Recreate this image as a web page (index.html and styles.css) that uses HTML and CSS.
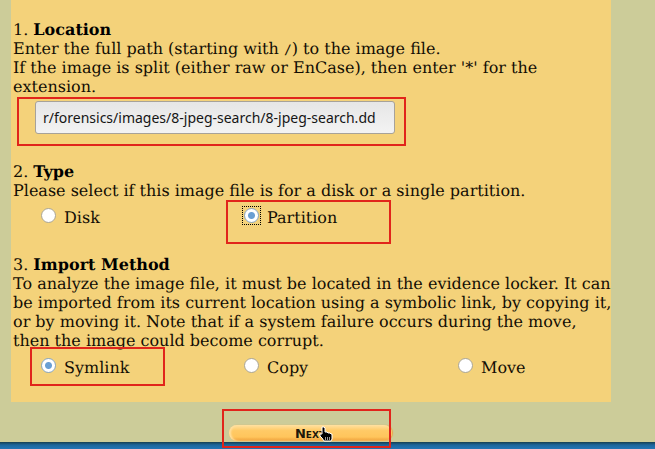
FILE: index.html
```
<!DOCTYPE html>
<html lang="en">
<head>
<meta charset="utf-8">
<title>Add Image</title>
<link rel="stylesheet" href="styles.css">
</head>
<body>
<form class="page">
  <div class="panel">
    <section class="step">
      <h2>1. <b>Location</b></h2>
      <p><label for="path">Enter the full path (starting with <code>/</code>) to the image file.<br>
      If the image is split (either raw or EnCase), then enter '*' for the<br>extension.</label></p>
      <div class="field">
        <input class="path" id="path" type="text" value="r/forensics/images/8-jpeg-search/8-jpeg-search.dd">
        <span class="mark mark-path"></span>
      </div>
    </section>
    <section class="step">
      <h2>2. <b>Type</b></h2>
      <p>Please select if this image file is for a disk or a single partition.</p>
      <div class="options">
        <label class="option"><input type="radio" name="type">Disk</label>
        <label class="option"><input type="radio" name="type" checked><span class="focus-ring"></span>Partition<span class="mark mark-partition"></span></label>
      </div>
    </section>
    <section class="step">
      <h2>3. <b>Import Method</b></h2>
      <p>To analyze the image file, it must be located in the evidence locker. It can<br>be imported from its current location using a symbolic link, by copying it,<br>or by moving it. Note that if a system failure occurs during the move,<br>then the image could become corrupt.</p>
      <div class="options">
        <label class="option"><input type="radio" name="method" checked>Symlink<span class="mark mark-symlink"></span></label>
        <label class="option"><input type="radio" name="method">Copy</label>
        <label class="option"><input type="radio" name="method">Move</label>
      </div>
    </section>
  </div>
  <div class="actions">
    <div class="next-wrap">
      <button class="next" type="button">Next</button>
      <svg class="pointer" width="14" height="16" viewBox="0 0 14 16" aria-hidden="true">
        <path d="M3 1h2l1 1v4h2l1 1h2l1 1h1v5l-1 2H5l-2-3-2-2V8h2z" fill="#000" stroke="#fff"/>
        <path d="M6.500 11v3M8.500 11v3M10.500 11v3" stroke="#999"/>
      </svg>
      <span class="mark mark-next"></span>
    </div>
  </div>
</form>
<footer class="desktop"></footer>
</body>
</html>
```
FILE: styles.css
```
* { box-sizing: border-box; }
body {
  margin: 0;
  min-height: 100vh;
  display: flex;
  flex-direction: column;
  background: #cccc99;
  color: #120d04;
  font: 16px/19px "DejaVu Serif", serif;
  text-rendering: geometricPrecision;
}
.page { flex: 1; }
.panel {
  margin: 0 44px 0 11px;
  padding: 20px 2px 0;
  background: #f4d27a;
}
.step { padding-bottom: 25px; }
.step:last-child { padding-bottom: 22px; }
h2, p { margin: 0; font-size: 16px; font-weight: 400; white-space: nowrap; }
h2 b { color: #000; }
code { font: 13px "DejaVu Sans Mono", monospace; line-height: 1; }
.field {
  position: relative;
  height: 41px;
  padding: 5px 0 0 22px;
}
.path {
  display: block;
  width: 360px;
  height: 33px;
  padding: 0 7px;
  border: 1px solid #a7a299;
  border-radius: 3px;
  background: linear-gradient(#e6e6e6, #f3f3f3);
  color: #151515;
  font: 14px "Noto Sans", sans-serif;
}
.options {
  display: grid;
  grid-template-columns: 203fr 214fr 151fr;
  padding: 8px 0 0 28px;
}
.option {
  position: relative;
  display: flex;
  align-items: flex-start;
  gap: 8px;
  height: 22px;
}
.option input {
  appearance: none;
  width: 15px;
  height: 15px;
  margin: 0;
  border: 1px solid #aaa594;
  border-radius: 50%;
  background: #fff;
}
.option input:checked {
  border-color: #86a6c4;
  background: radial-gradient(circle, #6a9fd3 0 3px, #fff 4px);
}
.focus-ring {
  position: absolute;
  top: -2px;
  left: -2px;
  width: 19px;
  height: 19px;
  border: 1px dotted #000;
}
.mark {
  position: absolute;
  border: 2px solid #e1251b;
  pointer-events: none;
}
.mark-path { left: 4px; top: 1px; width: 389px; height: 49px; }
.mark-partition { left: -18px; top: -8px; width: 165px; height: 44px; }
.mark-symlink { left: -11px; top: -11px; width: 135px; height: 39px; }
.actions {
  display: flex;
  justify-content: center;
  margin: 0 46px 0 11px;
  padding-top: 23px;
}
.next-wrap { position: relative; }
.next {
  display: block;
  width: 163px;
  height: 16px;
  padding: 0;
  border: 0;
  border-radius: 8px;
  background: linear-gradient(#ffe1a0, #ffca66 35%, #ffc55c 75%, #ee9c36);
  box-shadow: inset 2px 0 2px #ffe0a0, 1px 0 1px #e7a647;
  color: #21180a;
  font: bold 13px/15px "DejaVu Sans", sans-serif;
  font-variant: small-caps;
}
.pointer { position: absolute; left: 90px; top: 1px; }
.mark-next { left: -7px; top: -16px; width: 169px; height: 39px; }
.desktop {
  height: 7px;
  background: linear-gradient(#173f50, #1c669c 3px, #2475b6);
}
```
